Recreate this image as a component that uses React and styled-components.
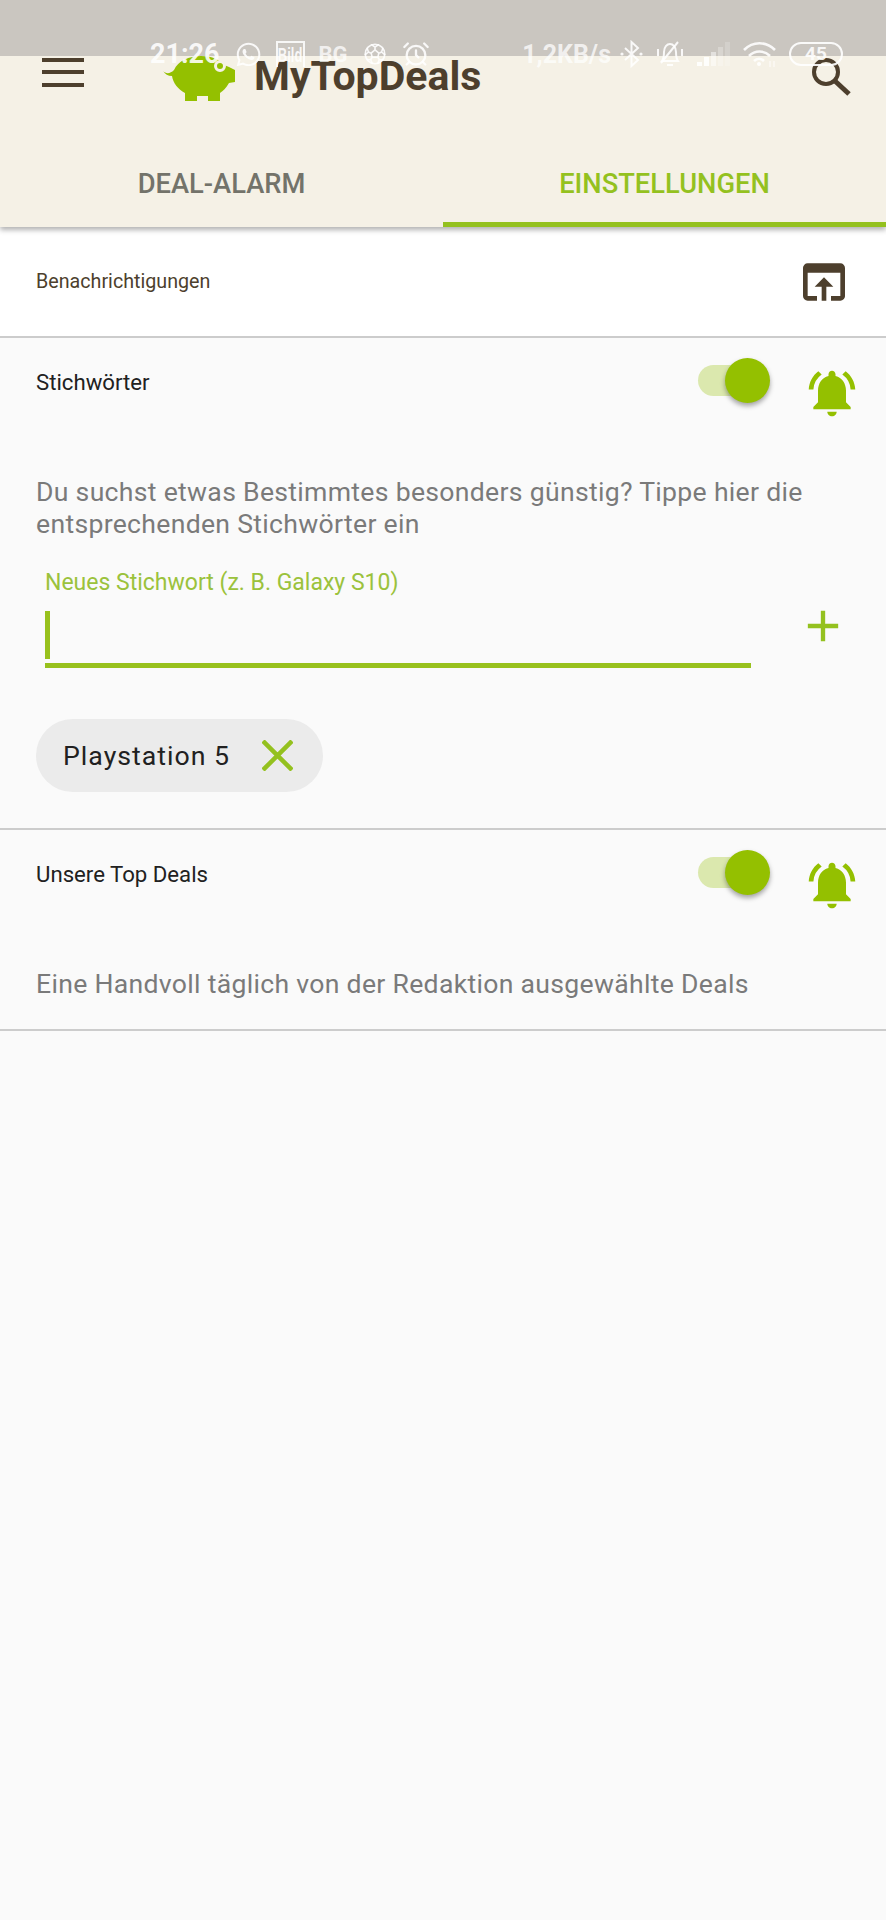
import React from 'react'
import styled, { createGlobalStyle } from 'styled-components'
import { FaWhatsapp } from 'react-icons/fa'
import { IoFootballOutline } from 'react-icons/io5'
import {
	MdAdd,
	MdNotificationsActive,
	MdOpenInBrowser,
} from 'react-icons/md'
import { AlarmClock } from 'lucide-react'

const GREEN = '#94c000'
const BROWN = '#4d3f2d'

const GlobalStyle = createGlobalStyle`
	html, body {
		background: #fafafa;
		margin: 0;
		padding: 0;
	}

	body {
		font-family: Roboto, "Liberation Sans", sans-serif;
	}
`

const Page = styled.div`
	height: 1920px;
	overflow: hidden;
	position: relative;
	width: 886px;
`

const StatusBar = styled.div`
	align-items: center;
	color: rgba(255, 255, 255, 0.88);
	display: flex;
	height: 30px;
	left: 150px;
	position: absolute;
	right: 43px;
	top: 39px;
	z-index: 2;
`

const Time = styled.span`
	font-size: 27px;
	font-weight: 700;
	margin-right: 15px;
`

const StatusGroup = styled.div`
	align-items: center;
	display: flex;
	gap: ${props => props.gap}px;
`

const BildBox = styled.span`
	border: 2px solid rgba(255, 255, 255, 0.85);
	border-bottom: 0;
	box-sizing: border-box;
	display: block;
	height: 26px;
	line-height: 24px;
	text-align: center;
	width: 29px;
`

const BildText = styled.span`
	display: inline-block;
	font-family: "Liberation Sans", sans-serif;
	font-size: 13px;
	font-weight: 700;
	transform: scaleY(1.6);
`

const SmallBold = styled.span`
	font-size: 22px;
	font-weight: 700;
	opacity: 0.85;
`

const Speed = styled.span`
	font-size: 25px;
	font-weight: 700;
	margin-right: -4px;
	opacity: 0.85;
`

const Spacer = styled.span`
	flex-grow: 1;
`

const Battery = styled.span`
	border: 2px solid rgba(255, 255, 255, 0.9);
	border-radius: 12px;
	box-sizing: border-box;
	font-size: 19px;
	font-weight: 700;
	height: 24px;
	line-height: 20px;
	text-align: center;
	width: 54px;
`

const AppHeader = styled.header`
	background: #f5f1e6;
	border-top: 56px solid #cac6c0;
	box-shadow: 0 3px 5px rgba(0, 0, 0, 0.3);
	position: relative;
	z-index: 1;
`

const Toolbar = styled.div`
	align-items: flex-start;
	display: flex;
	height: 94px;
	padding: 0 35px 0 42px;
`

const MenuBars = styled.span`
	border-bottom: 4px solid ${BROWN};
	border-top: 4px solid ${BROWN};
	box-sizing: border-box;
	display: block;
	height: 29px;
	margin-top: 2px;
	position: relative;
	width: 42px;

	&::after {
		background: ${BROWN};
		content: '';
		height: 4px;
		left: 0;
		position: absolute;
		right: 0;
		top: 8px;
	}
`

const Brand = styled.div`
	align-items: flex-start;
	display: flex;
	flex-grow: 1;
	gap: 19px;
	margin-left: 79px;
`

const BrandName = styled.span`
	color: ${BROWN};
	font-size: 41px;
	font-weight: 700;
	line-height: 48px;
	margin-top: -4px;
`

const Tabs = styled.nav`
	display: flex;
	height: 77px;
`

const Tab = styled.div`
	align-items: center;
	border-bottom: 5px solid ${props => (props.active ? '#94c11f' : 'transparent')};
	color: ${props => (props.active ? '#94c11f' : '#73736a')};
	display: flex;
	flex: 1;
	font-size: 27.3px;
	font-weight: 500;
	justify-content: center;
	padding-bottom: 4px;
`

const NoticeRow = styled.section`
	align-items: center;
	background: #fff;
	border-bottom: 2px solid #cccccc;
	display: flex;
	height: 109px;
	justify-content: space-between;
	padding: 0 34px 0 36px;
`

const NoticeLabel = styled.span`
	color: ${BROWN};
	font-size: 19.7px;
`

const Section = styled.section`
	border-bottom: 2px solid #cccccc;
	padding-bottom: ${props => props.bottom}px;
`

const SectionHead = styled.div`
	align-items: flex-start;
	display: flex;
	height: 138px;
	padding: 0 26px 0 36px;
`

const SectionTitle = styled.span`
	color: #212121;
	flex-grow: 1;
	font-size: 22.2px;
	line-height: 50px;
	margin-top: 19px;
`

const SwitchTrack = styled.span`
	background: #dbe8ae;
	border-radius: 16px;
	display: block;
	height: 31px;
	margin: 27px 42px 0 0;
	position: relative;
	width: 64px;
`

const SwitchThumb = styled.span`
	background: ${GREEN};
	border-radius: 50%;
	box-shadow: 0 3px 5px rgba(0, 0, 0, 0.35);
	height: 45px;
	position: absolute;
	right: -8px;
	top: -7px;
	width: 45px;
`

const BellWrap = styled.span`
	color: ${GREEN};
	display: flex;
	margin-top: 27px;
`

const Description = styled.p`
	color: #7a7a7a;
	font-size: 26.6px;
	letter-spacing: 0.3px;
	line-height: 32px;
	margin: 0;
	padding: 0 36px;
`

const InputRow = styled.div`
	align-items: flex-end;
	display: flex;
	margin-top: 29px;
	padding: 0 37px 0 45px;
`

const Field = styled.div`
	width: 706px;
`

const FieldLabel = styled.label`
	color: #9bc23c;
	display: block;
	font-size: 23px;
	line-height: 28px;
`

const FieldInput = styled.div`
	border-bottom: 5px solid #98c11d;
	margin-top: 14px;
	padding-bottom: 4px;
`

const Caret = styled.span`
	background: #98c11d;
	display: block;
	height: 48px;
	width: 5px;
`

const AddButton = styled.span`
	color: #94c11f;
	display: flex;
	margin-bottom: 16px;
	margin-left: auto;
`

const Chip = styled.div`
	align-items: center;
	background: #ebebeb;
	border-radius: 37px;
	color: #212121;
	display: flex;
	font-size: 26.7px;
	gap: 32px;
	height: 73px;
	letter-spacing: 1px;
	margin: 51px 0 0 36px;
	padding: 0 30px 0 27px;
	width: fit-content;
`

const Pig = () => (
	<svg width="72" height="46" viewBox="0 0 72 46">
		<path
			d="M0 15C3 18 7 18 11 14C15 5 26 0 38 0C48 0 56 3 61 9L66 11L72 14L72 26L66 27C63 32 60 35 57 37L57 45L45 45L45 40L34 40L34 45L22 45L22 37C15 33 10 27 9 20C5 20 2 18 0 15Z"
			fill={GREEN}
		/>
		<circle cx="57" cy="10" r="4.5" fill="none" stroke="#f5f1e6" strokeWidth="3" />
	</svg>
)

const BluetoothIcon = () => (
	<svg width="23" height="28" viewBox="0 0 23 28" fill="none" stroke="currentColor" strokeWidth="2">
		<path d="M5 8L18 20L11.5 26V2L18 8L5 20" />
		<circle cx="2" cy="14" r="1.6" fill="currentColor" stroke="none" />
		<circle cx="21" cy="14" r="1.6" fill="currentColor" stroke="none" />
	</svg>
)

const MutedBell = () => (
	<svg width="28" height="26" viewBox="0 0 28 26" fill="none" stroke="currentColor" strokeWidth="2">
		<path d="M6 20C8 17 8 14 8 11C8 6 11 3 14 3C17 3 20 6 20 11C20 14 20 17 22 20Z" />
		<path d="M11 24H17" />
		<path d="M5 22L22 1" />
		<path d="M2 8V15M26 8V15" />
	</svg>
)

const SignalBars = () => (
	<svg width="33" height="26" viewBox="0 0 33 26" fill="currentColor">
		<rect x="0" y="21" width="5" height="4" />
		<rect x="7" y="16" width="5" height="9" />
		<rect x="14" y="11" width="5" height="14" opacity="0.55" />
		<rect x="21" y="6" width="5" height="19" opacity="0.3" />
		<rect x="28" y="1" width="5" height="24" opacity="0.2" />
	</svg>
)

const WifiIcon = () => (
	<svg width="33" height="26" viewBox="0 0 33 26" fill="none" stroke="currentColor" strokeWidth="2.6">
		<path d="M1 9C10 0 23 0 32 9" />
		<path d="M6 15C12 9 21 9 27 15" />
		<path d="M11 20C14 17 18 17 21 20" />
		<circle cx="16" cy="23" r="2" fill="currentColor" stroke="none" />
		<path d="M27 20V26M31 20V26" strokeWidth="1.5" opacity="0.7" />
	</svg>
)

const SearchIcon = () => (
	<svg width="42" height="40" viewBox="0 0 42 40" fill="none" stroke={BROWN}>
		<circle cx="17" cy="16" r="12" strokeWidth="4" />
		<path d="M26 25l14 13" strokeWidth="5" />
	</svg>
)

const CloseIcon = () => (
	<svg width="31" height="31" viewBox="0 0 31 31" stroke="#94c11f" strokeWidth="4.5">
		<path d="M1 1l29 29M30 1L1 30" />
	</svg>
)

const Bell = () => (
	<BellWrap>
		<MdNotificationsActive size={56} />
	</BellWrap>
)

const Toggle = () => (
	<SwitchTrack>
		<SwitchThumb />
	</SwitchTrack>
)

const App = () => (
	<>
		<GlobalStyle />
		<Page>
			<StatusBar>
				<Time>21:26</Time>
				<StatusGroup gap={14}>
					<FaWhatsapp size={27} />
					<BildBox>
						<BildText>Bild</BildText>
					</BildBox>
					<SmallBold>BG</SmallBold>
					<IoFootballOutline size={26} />
					<AlarmClock size={28} />
				</StatusGroup>
				<Spacer />
				<StatusGroup gap={13}>
					<Speed>1,2KB/s</Speed>
					<BluetoothIcon />
					<MutedBell />
					<SignalBars />
					<WifiIcon />
					<Battery>45</Battery>
				</StatusGroup>
			</StatusBar>

			<AppHeader>
				<Toolbar>
					<MenuBars />
					<Brand>
						<Pig />
						<BrandName>MyTopDeals</BrandName>
					</Brand>
					<SearchIcon />
				</Toolbar>
				<Tabs>
					<Tab>DEAL-ALARM</Tab>
					<Tab active>EINSTELLUNGEN</Tab>
				</Tabs>
			</AppHeader>

			<NoticeRow>
				<NoticeLabel>Benachrichtigungen</NoticeLabel>
				<MdOpenInBrowser size={56} color={BROWN} />
			</NoticeRow>

			<Section bottom={36}>
				<SectionHead>
					<SectionTitle>Stichwörter</SectionTitle>
					<Toggle />
					<Bell />
				</SectionHead>
				<Description>
					Du suchst etwas Bestimmtes besonders günstig? Tippe hier die
					entsprechenden Stichwörter ein
				</Description>
				<InputRow>
					<Field>
						<FieldLabel>Neues Stichwort (z. B. Galaxy S10)</FieldLabel>
						<FieldInput>
							<Caret />
						</FieldInput>
					</Field>
					<AddButton>
						<MdAdd size={52} />
					</AddButton>
				</InputRow>
				<Chip>
					Playstation 5
					<CloseIcon />
				</Chip>
			</Section>

			<Section bottom={29}>
				<SectionHead>
					<SectionTitle>Unsere Top Deals</SectionTitle>
					<Toggle />
					<Bell />
				</SectionHead>
				<Description>Eine Handvoll täglich von der Redaktion ausgewählte Deals</Description>
			</Section>
		</Page>
	</>
)

export default App
